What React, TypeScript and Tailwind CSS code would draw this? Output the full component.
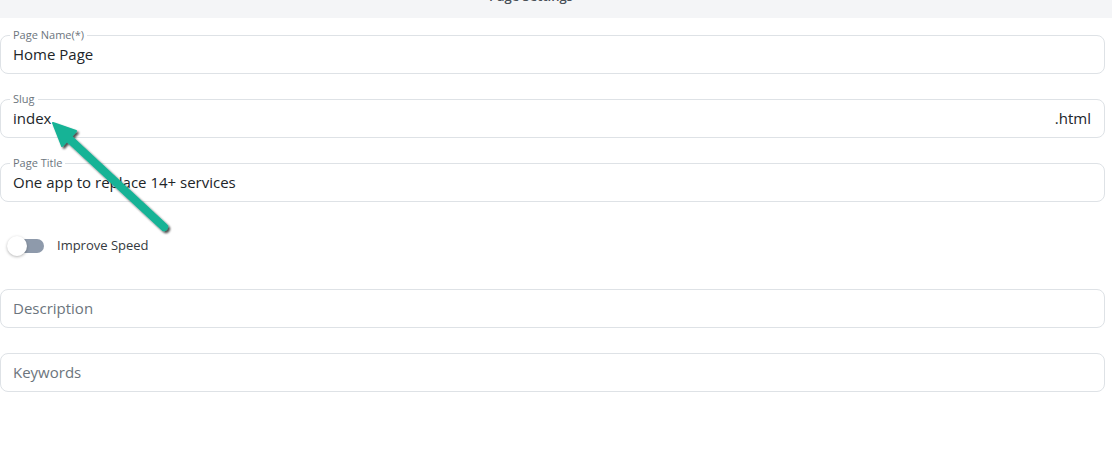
import React from "react";

const font = { fontFamily: '"Open Sans", "Noto Sans", sans-serif' };

type FieldProps = {
  label?: string;
  value?: string;
  placeholder?: string;
  suffix?: string;
};

const Field = ({ label, value, placeholder, suffix }: FieldProps) => (
  <div className="relative flex h-[39px] items-center rounded-[8px] border border-[#dee2e6] bg-white pl-[12px] pr-[13px]">
    {/* floating legend */}
    {label && (
      <span className="absolute -top-[8px] left-[9px] bg-white px-[3px] text-[11px] leading-[14px] text-[#6c757d]">
        {label}
      </span>
    )}
    <span className={`flex-1 text-[15px] ${value ? "text-[#212529]" : "text-[#6c757d]"}`}>
      {value ?? placeholder}
    </span>
    {suffix && <span className="text-[15px] text-[#212529]">{suffix}</span>}
  </div>
);

const App = () => {
  return (
    <div className="relative h-[467px] w-[1112px] overflow-hidden bg-white" style={font}>
      {/* Header strip, scrolled so only the bottom of the title shows */}
      <div className="flex h-[18px] items-start overflow-hidden bg-[#f4f5f7] pl-[489px]">
        <span className="-mt-[11px] text-[13px] font-semibold leading-[14px] text-[#495057]">Page Settings</span>
      </div>

      {/* Form */}
      <div className="flex flex-col pr-[7px] pt-[17px]">
        <Field label="Page Name(*)" value="Home Page" />
        <div className="mt-[25px]">
          <Field label="Slug" value="index" suffix=".html" />
        </div>
        <div className="mt-[25px]">
          <Field label="Page Title" value="One app to replace 14+ services" />
        </div>

        {/* Toggle */}
        <div className="mt-[25px] flex h-[38px] items-center gap-[13px] pl-[8px]">
          <div className="relative h-[14px] w-[36px] rounded-full bg-[#8e9aab]">
            <div className="absolute -left-[1px] -top-[3px] h-[20px] w-[20px] rounded-full bg-white shadow-[0_1px_3px_rgba(0,0,0,0.3)]" />
          </div>
          <span className="text-[13px] text-[#343a40]">Improve Speed</span>
        </div>

        <div className="mt-[24px]">
          <Field placeholder="Description" />
        </div>
        <div className="mt-[25px]">
          <Field placeholder="Keywords" />
        </div>
      </div>

      {/* Annotation arrow */}
      <svg className="pointer-events-none absolute left-0 top-0" width="1112" height="467">
        <defs>
          <filter id="shadow" x="-20%" y="-20%" width="140%" height="140%">
            <feDropShadow dx="2" dy="2" stdDeviation="1.2" floodColor="#000" floodOpacity="0.7" />
          </filter>
        </defs>
        <g filter="url(#shadow)">
          <line x1="164" y1="227" x2="64" y2="134" stroke="#14b396" strokeWidth="8" strokeLinecap="round" />
          <polygon points="53,123 76,131 62,146" fill="#14b396" stroke="#14b396" strokeWidth="2" strokeLinejoin="round" />
        </g>
      </svg>
    </div>
  );
};

export default App;
